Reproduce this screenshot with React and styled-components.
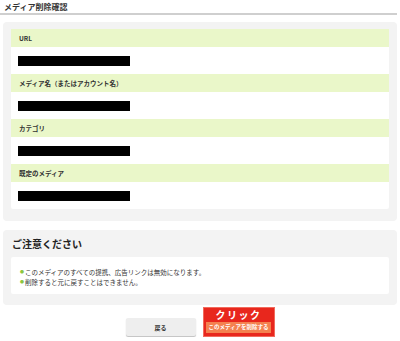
import React from "react";
import styled, { createGlobalStyle } from "styled-components";

const GlobalStyle = createGlobalStyle`
   body {
      margin: 0;
      background: #fff;
      font-family: "Noto Sans CJK JP", "Noto Sans", sans-serif;
      color: #333;
   }
`
const Page = styled.div`
   width: 397px;
   display: flex;
   flex-direction: column;
`
const Title = styled.h2`
   margin: 0;
   padding: 1px 0 1px 4px;
   font-size: 8px;
   line-height: 11px;
   font-weight: 700;
   color: #333;
   border-bottom: 2px solid #cfcfcf;
`
const Panel = styled.section`
   margin: ${props => props.top}px 0 0 3px;
   padding: ${props => props.pad};
   background: #f3f3f3;
   border-radius: 4px;
`
const Card = styled.div`
   background: #fff;
   border-radius: 2px;
`
const Label = styled.div`
   height: 18px;
   display: flex;
   align-items: center;
   padding-left: 8px;
   background: #eaf7c9;
   font-size: 6.5px;
   font-weight: 700;
   color: #333;
`
const Value = styled.div`
   height: 27px;
   display: flex;
   align-items: center;
   padding-left: 7px;
`
const Redacted = styled.div`
   width: 112px;
   height: 10px;
   background: #000;
`
const Heading = styled.h3`
   margin: 0;
   height: 27px;
   display: flex;
   align-items: center;
   padding-left: 1px;
   font-size: 10px;
   font-weight: 700;
   color: #222;
`
const Notes = styled.ul`
   margin: 0;
   list-style: none;
   padding: 11px 9px 7px;
   background: #fff;
   border-radius: 2px;
   font-size: 6.5px;
   line-height: 9.5px;
   color: #333;
`
const Note = styled.li`
   &::before {
      content: "●";
      color: #8cc63f;
      font-size: 4px;
      margin-right: 1px;
      vertical-align: 1px;
   }
`
const Actions = styled.div`
   display: flex;
   justify-content: center;
   align-items: flex-end;
   gap: 7px;
   margin: 2px 0 0 3px;
`
const BackButton = styled.button`
   width: 70px;
   height: 18px;
   margin-bottom: 1px;
   border: none;
   border-radius: 2px;
   background: #eeeeee;
   box-shadow: 0 1px 1px rgba(0,0,0,0.25);
   font-family: inherit;
   font-size: 6px;
   font-weight: 700;
   color: #333;
`
const Callout = styled.div`
   width: 70px;
   height: 28px;
   border: 1px solid #f26a5c;
   background: #e8271d;
   display: flex;
   flex-direction: column;
   align-items: center;
`
const CalloutText = styled.div`
   color: #fff;
   font-size: 10px;
   font-weight: 700;
   line-height: 14px;
   letter-spacing: 1.5px;
`
const DeleteButton = styled.button`
   width: 65px;
   height: 11px;
   padding: 0;
   border: none;
   background: #f4814f;
   color: #fff;
   font-family: inherit;
   font-size: 5.5px;
   font-weight: 700;
   line-height: 11px;
   white-space: nowrap;
`

const fields = ['URL', 'メディア名（またはアカウント名）', 'カテゴリ', '既定のメディア']

const App = () => {
   return (
      <Page>
         <GlobalStyle />
         <Title>メディア削除確認</Title>
         <Panel top={7} pad="7px 8px 12px">
            <Card>
               {fields.map(f => (
                  <React.Fragment key={f}>
                     <Label>{f}</Label>
                     <Value><Redacted /></Value>
                  </React.Fragment>
               ))}
            </Card>
         </Panel>
         <Panel top={9} pad="0 8px 11px">
            <Heading>ご注意ください</Heading>
            <Notes>
               <Note>このメディアのすべての提携、広告リンクは無効になります。</Note>
               <Note>削除すると元に戻すことはできません。</Note>
            </Notes>
         </Panel>
         <Actions>
            <BackButton>戻る</BackButton>
            <Callout>
               <CalloutText>クリック</CalloutText>
               <DeleteButton>このメディアを削除する</DeleteButton>
            </Callout>
         </Actions>
      </Page>
   )
}
export default App
